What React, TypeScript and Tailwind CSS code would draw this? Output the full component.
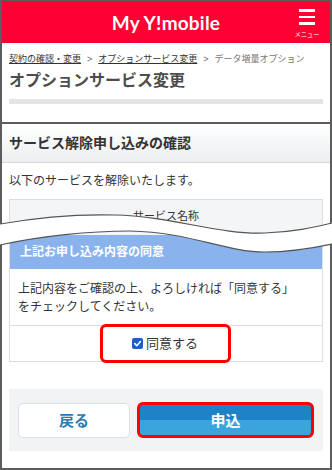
import React from "react";

const jp = { fontFamily: "'Liberation Sans', 'Noto Sans CJK JP', sans-serif" };

function Wave() {
  const upper = "M0,19 C40,12 80,9 115,10 C170,11 220,30 265,28 C295,27 315,22 332,18";
  const lower = "M0,40 C40,31 90,26 130,26 C190,27 225,47 265,47 C295,47 318,42 332,39";
  const fill =
    "M0,19 C40,12 80,9 115,10 C170,11 220,30 265,28 C295,27 315,22 332,18 L332,39 C318,42 295,47 265,47 C225,47 190,27 130,26 C90,26 40,31 0,40 Z";
  return (
    <svg
      className="absolute left-0 top-[205px]"
      width="332"
      height="55"
      viewBox="0 0 332 55"
    >
      <path d={fill} fill="#ffffff" />
      <path d={upper} fill="none" stroke="#555" strokeWidth="1.2" />
      <path d={lower} fill="none" stroke="#555" strokeWidth="1.2" />
    </svg>
  );
}

export default function App() {
  return (
    <div className="relative w-[332px] h-[470px] overflow-hidden bg-white" style={jp}>
      <div className="w-[332px] h-[470px] border-x-2 border-b-2 border-t border-[#5c5c5c] flex flex-col">
        {/* Header */}
        <div className="relative h-[42px] shrink-0 bg-[#fe0032] flex items-center justify-center">
          <span
            className="text-white text-[19px] font-bold leading-none tracking-[0.2px]"
            style={{ fontFamily: "Lato, 'Liberation Sans', sans-serif" }}
          >
            My Y!mobile
          </span>
          <div className="absolute right-[9px] top-[8px] flex flex-col items-center">
            <div className="flex flex-col gap-[4px] w-[16px]">
              <span className="block h-[2.5px] bg-white" />
              <span className="block h-[2.5px] bg-white" />
              <span className="block h-[2.5px] bg-white" />
            </div>
            <span className="text-white text-[7px] leading-none mt-[6px] scale-90">メニュー</span>
          </div>
        </div>

        {/* Breadcrumb */}
        <div className="pl-[7px] pt-[9px] text-[9px] leading-[14px] text-[#333] flex gap-[6px] whitespace-nowrap">
          <span className="underline">契約の確認・変更</span>
          <span className="text-[#666]">&gt;</span>
          <span className="underline">オプションサービス変更</span>
          <span className="text-[#666]">&gt;</span>
          <span className="text-[#777]">データ増量オプション</span>
        </div>
        <div className="pl-[7px] mt-[5px] text-[16px] leading-[20px] font-bold text-[#4d4d4d]">
          オプションサービス変更
        </div>
        <div className="mx-[7px] mt-[8px] h-[5px] bg-[#e4e4e4]" />

        {/* Section heading */}
        <div className="mt-[18px] border-t-2 border-[#5c5c5c] h-[41px] shrink-0 bg-gradient-to-b from-white to-[#eceef1] border-b border-b-[#d8d8d8] flex items-center pl-[7px]">
          <span className="text-[14px] font-bold text-[#333] leading-none">サービス解除申し込みの確認</span>
        </div>
        <div className="pl-[7px] mt-[9px] text-[12px] leading-[18px] text-[#333]">
          以下のサービスを解除いたします。
        </div>
        <div className="mx-[7px] mt-[9px] h-[36px] shrink-0 border-t border-x border-[#dddddd] bg-[#f4f5f7] text-center pt-[9px] text-[11px] leading-[14px] text-[#333]">
          サービス名称
        </div>

        {/* Agreement box */}
        <div className="mx-[7px] border-x border-b border-[#dddddd]">
          <div className="h-[34px] bg-[#8ab3ee] flex items-end pb-[10px] pl-[10px]">
            <span className="text-white text-[12px] font-bold leading-[14px]">上記お申し込み内容の同意</span>
          </div>
          <div className="pl-[8px] pt-[11px] pb-[9px] text-[12px] leading-[18px] text-[#333] border-b border-[#dddddd]">
            上記内容をご確認の上、よろしければ「同意する」
            <br />
            をチェックしてください。
          </div>
          <div className="h-[35px] flex justify-center">
            <div className="w-[131px] h-[39px] -mt-[2px] ml-[-2px] border-[3px] border-[#ff0000] rounded-[6px] flex items-center justify-center gap-[3px] relative z-10 bg-white/0">
              <span className="w-[11px] h-[11px] rounded-[2px] bg-[#1d5fc9] flex items-center justify-center">
                <svg width="9" height="9" viewBox="0 0 10 10">
                  <path d="M2 5.2 L4.2 7.4 L8.2 2.8" fill="none" stroke="#fff" strokeWidth="1.8" strokeLinecap="round" strokeLinejoin="round" />
                </svg>
              </span>
              <span className="text-[13px] leading-none text-[#333]">同意する</span>
            </div>
          </div>
        </div>

        {/* Buttons */}
        <div className="mx-[7px] mt-[27px] h-[62px] shrink-0 bg-[#f2f3f5] flex items-center gap-[7px] px-[9px]">
          <div className="w-[112px] h-[35px] bg-white border border-[#dcdfe3] rounded-[5px] flex items-center justify-center">
            <span className="text-[15px] font-bold text-[#2d7bb4] leading-none">戻る</span>
          </div>
          <div className="w-[177px] h-[36px] border-[3px] border-[#ff0000] rounded-[6px] overflow-hidden bg-[linear-gradient(to_bottom,#1f82c6_50%,#3ba4dc_50%)] flex items-center justify-center">
            <span className="text-[15px] font-bold text-white leading-none">申込</span>
          </div>
        </div>
      </div>
      <Wave />
    </div>
  );
}
